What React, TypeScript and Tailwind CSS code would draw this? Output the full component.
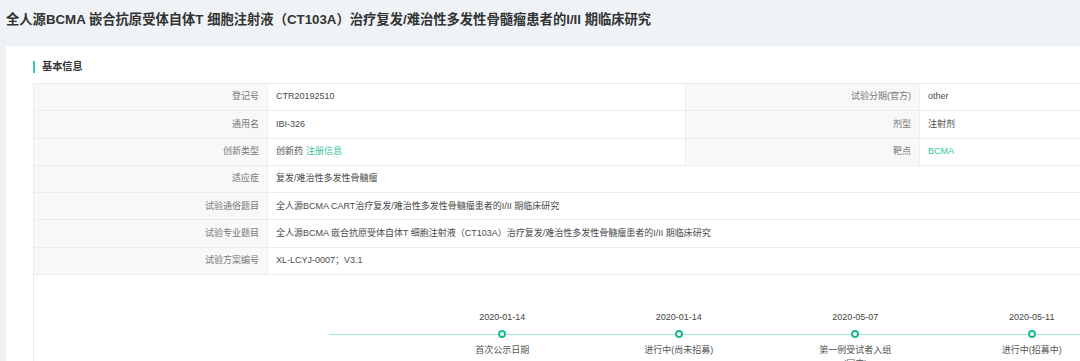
import React from "react";

type Cell = { label: string; value: React.ReactNode };

const font = "font-['Liberation_Sans','Noto_Sans_CJK_SC',sans-serif]";

const pairRows: [Cell, Cell][] = [
  [
    { label: "登记号", value: "CTR20192510" },
    { label: "试验分期(官方)", value: "other" },
  ],
  [
    { label: "通用名", value: "IBI-326" },
    { label: "剂型", value: "注射剂" },
  ],
  [
    {
      label: "创新类型",
      value: (
        <>
          创新药<span className="ml-[3px] text-[#35c29f]">注册信息</span>
        </>
      ),
    },
    { label: "靶点", value: <span className="text-[#35c29f]">BCMA</span> },
  ],
];

const wideRows: Cell[] = [
  { label: "适应症", value: "复发/难治性多发性骨髓瘤" },
  { label: "试验通俗题目", value: "全人源BCMA CART治疗复发/难治性多发性骨髓瘤患者的I/II 期临床研究" },
  {
    label: "试验专业题目",
    value: "全人源BCMA 嵌合抗原受体自体T 细胞注射液（CT103A）治疗复发/难治性多发性骨髓瘤患者的I/II 期临床研究",
  },
  { label: "试验方案编号", value: "XL-LCYJ-0007；V3.1" },
];

const events = [
  { date: "2020-01-14", label: "首次公示日期" },
  { date: "2020-01-14", label: "进行中(尚未招募)" },
  { date: "2020-05-07", label: "第一例受试者入组(国内)" },
  { date: "2020-05-11", label: "进行中(招募中)" },
];

function Label({ children }: { children: React.ReactNode }) {
  return (
    <div className="w-[234px] shrink-0 bg-[#f8f8f8] border-r border-[#efefef] flex items-center justify-end pr-[8px] text-[#777]">
      {children}
    </div>
  );
}

function Value({ children, wide }: { children: React.ReactNode; wide?: boolean }) {
  return (
    <div className={`${wide ? "flex-1" : "w-[417px] shrink-0"} flex items-center pl-[8px] text-[#4a4a4a] whitespace-nowrap`}>
      {children}
    </div>
  );
}

export default function App() {
  return (
    <div className={`w-full h-[361px] overflow-hidden bg-[#eff3f6] ${font}`}>
      <h1 className="pl-[6px] pt-[10px] h-[46px] text-[13.3px] leading-[20px] font-bold text-[#333] whitespace-nowrap">
        全人源BCMA 嵌合抗原受体自体T 细胞注射液（CT103A）治疗复发/难治性多发性骨髓瘤患者的I/II 期临床研究
      </h1>

      <div className="ml-[6px] w-[1360px] bg-white pl-[27px] pt-[14px] pb-[40px]">
        <div className="flex items-center h-[14px] mb-[9px]">
          <span className="w-[2px] h-[12px] bg-[#3cc8a8]" />
          <span className="ml-[7px] text-[10.2px] font-bold text-[#333]">基本信息</span>
        </div>

        <div className="w-[1302px] border-l border-[#ececec] text-[9px]">
          <div className="border-t border-[#ececec]">
            {pairRows.map(([a, b], i) => (
              <div key={i} className="flex h-[27.3px] border-b border-[#ececec]">
                <Label>{a.label}</Label>
                <Value>{a.value}</Value>
                <div className="border-l border-[#efefef]" />
                <Label>{b.label}</Label>
                <Value wide>{b.value}</Value>
              </div>
            ))}
            {wideRows.map((r, i) => (
              <div key={i} className="flex h-[27.3px] border-b border-[#ececec]">
                <Label>{r.label}</Label>
                <Value wide>{r.value}</Value>
              </div>
            ))}
          </div>

          <div className="flex pt-[36px] pl-[295px]">
            <div className="w-[85px] flex flex-col">
              <div className="h-[12px] mb-[7px]" />
              <div className="h-[8px] flex items-center">
                <div className="h-px w-full bg-[#a9e4d1]" />
              </div>
            </div>
            {events.map((e, i) => (
              <div key={i} className="w-[176.5px] shrink-0 flex flex-col items-center">
                <div className="h-[12px] leading-[12px] mb-[7px] text-[#444]">{e.date}</div>
                <div className="h-[8px] w-full flex items-center">
                  <div className="h-px flex-1 bg-[#a9e4d1]" />
                  <div className="w-[8px] h-[8px] rounded-full border-2 border-[#1db893] bg-white" />
                  <div className="h-px flex-1 bg-[#a9e4d1]" />
                </div>
                <div className="mt-[5px] w-[80px] text-center leading-[14px] text-[#555]">{e.label}</div>
              </div>
            ))}
          </div>
        </div>
      </div>
    </div>
  );
}
